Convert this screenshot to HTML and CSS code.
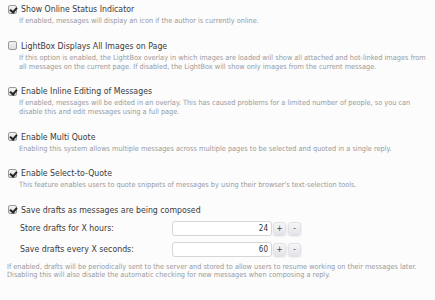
FILE: index.html
```html
<!DOCTYPE html>
<html lang="en">

<head>
    <meta charset="UTF-8">
    <meta name="viewport" content="width=device-width, initial-scale=1.0">
    <title>Message Options</title>
    <link rel="stylesheet" href="styles.css">
</head>

<body>
    <ul id="options">
        <li class="option">
            <label class="check">
                <span class="box checked"></span>
                <span>Show Online Status Indicator</span>
            </label>
            <p class="hint">If enabled, messages will display an icon if the author is currently online.</p>
        </li>
        <li class="option">
            <label class="check">
                <span class="box"></span>
                <span>LightBox Displays All Images on Page</span>
            </label>
            <p class="hint">If this option is enabled, the LightBox overlay in which images are loaded will show all attached and hot-linked images from all messages on the current page. If disabled, the LightBox will show only images from the current message.</p>
        </li>
        <li class="option">
            <label class="check">
                <span class="box checked"></span>
                <span>Enable Inline Editing of Messages</span>
            </label>
            <p class="hint">If enabled, messages will be edited in an overlay. This has caused problems for a limited number of people, so you can disable this and edit messages using a full page.</p>
        </li>
        <li class="option">
            <label class="check">
                <span class="box checked"></span>
                <span>Enable Multi Quote</span>
            </label>
            <p class="hint">Enabling this system allows multiple messages across multiple pages to be selected and quoted in a single reply.</p>
        </li>
        <li class="option">
            <label class="check">
                <span class="box checked"></span>
                <span>Enable Select-to-Quote</span>
            </label>
            <p class="hint">This feature enables users to quote snippets of messages by using their browser's text-selection tools.</p>
        </li>
        <li class="option">
            <label class="check">
                <span class="box checked"></span>
                <span>Save drafts as messages are being composed</span>
            </label>
            <div class="spin-row">
                <span class="spin-label">Store drafts for X hours:</span>
                <input class="spin-input" type="text" value="24">
                <button class="spin-btn">+</button>
                <button class="spin-btn">-</button>
            </div>
            <div class="spin-row">
                <span class="spin-label">Save drafts every X seconds:</span>
                <input class="spin-input" type="text" value="60">
                <button class="spin-btn">+</button>
                <button class="spin-btn">-</button>
            </div>
            <p class="hint footer-hint">If enabled, drafts will be periodically sent to the server and stored to allow users to resume working on their messages later.<br>Disabling this will also disable the automatic checking for new messages when composing a reply.</p>
        </li>
    </ul>
</body>

</html>
```

FILE: styles.css
```css
* {
    margin: 0;
    padding: 0;
    box-sizing: border-box;
}

html,
body {
    height: 100%;
}

body {
    background-color: #fcfcfd;
    font-family: "DejaVu Sans Condensed", "DejaVu Sans", sans-serif;
    color: #3a3a3a;
}

#options {
    list-style: none;
    padding: 3px 3px 0 8px;
}

.option {
    margin-bottom: 14.5px;
}

.check {
    display: flex;
    align-items: center;
    height: 12px;
    font-size: 8.7px;
    line-height: 12px;
}

.box {
    width: 9px;
    height: 9px;
    margin-right: 4px;
    border: 1px solid #9a9a9a;
    border-radius: 2px;
    background: linear-gradient(#f2f2f2, #dcdcdc);
    position: relative;
}

.box.checked::after {
    content: "";
    position: absolute;
    left: 2px;
    top: 0;
    width: 3px;
    height: 5px;
    border: solid #222;
    border-width: 0 2px 2px 0;
    transform: rotate(40deg);
}

.hint {
    margin: 1px 0 0 11px;
    font-size: 7.3px;
    line-height: 9px;
    color: #9a9a9a;
}

.spin-row {
    display: flex;
    align-items: center;
    margin: 5px 0 0 12px;
    font-size: 8.7px;
}

.spin-row + .spin-row {
    margin-top: 6px;
}

.spin-label {
    width: 152px;
}

.spin-input {
    width: 100px;
    height: 15px;
    padding: 0 3px;
    border: 1px solid #d6d6d6;
    border-radius: 3px;
    background-color: #fff;
    font-family: inherit;
    font-size: 8px;
    color: #333;
    text-align: right;
}

.spin-btn {
    width: 13px;
    height: 13px;
    margin-left: 1px;
    border: 1px solid #e2e2e6;
    border-radius: 3px;
    background: linear-gradient(#f6f6f8, #e4e4ea);
    box-shadow: 0 1px 2px rgba(0, 0, 0, .15);
    font-family: inherit;
    font-size: 8px;
    color: #444;
    line-height: 11px;
}

.spin-btn + .spin-btn {
    margin-left: 2px;
}

.footer-hint {
    margin: 6px 0 0 -1px;
    line-height: 8.5px;
    white-space: nowrap;
}
```
